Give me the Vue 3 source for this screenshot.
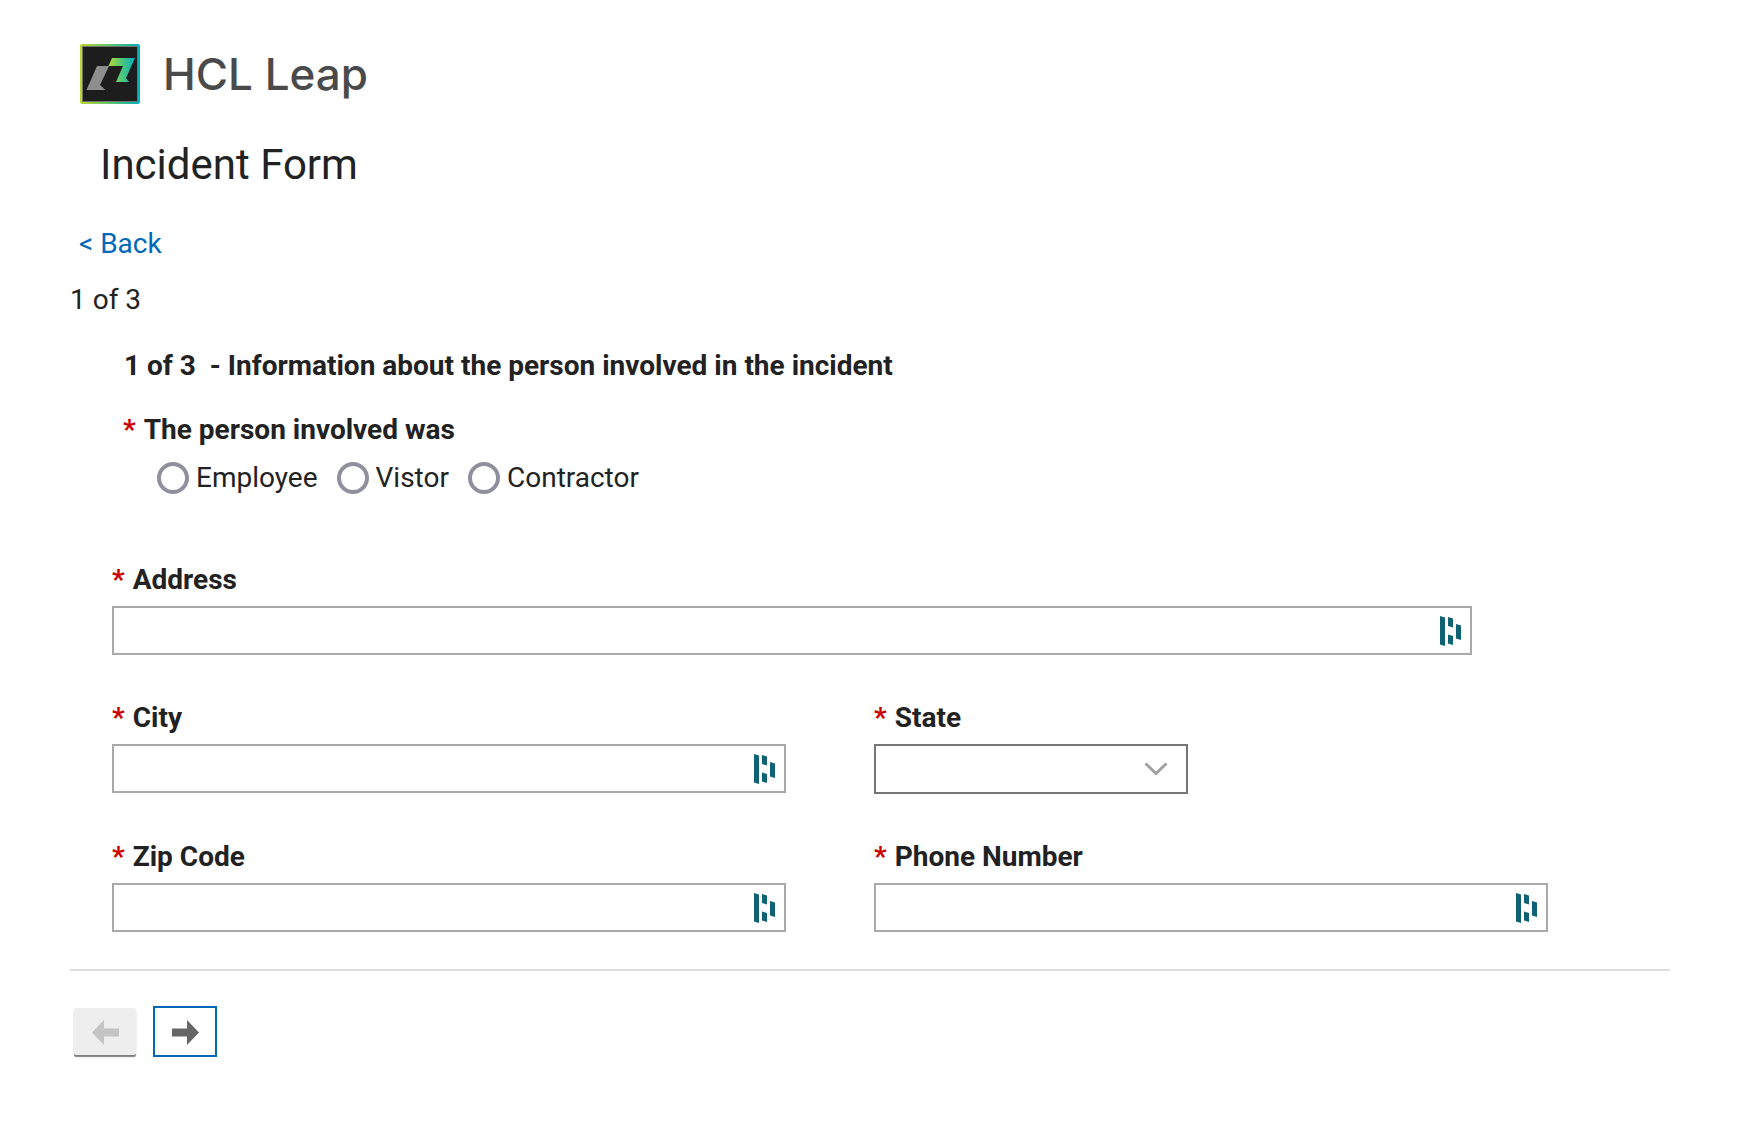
<script setup>
import { ref, reactive } from 'vue'

const personTypes = ['Employee', 'Vistor', 'Contractor']
const personType = ref('')

const fields = [
  { id: 'address', label: 'Address', type: 'text', wide: true },
  { id: 'city', label: 'City', type: 'text' },
  { id: 'state', label: 'State', type: 'select' },
  { id: 'zip', label: 'Zip Code', type: 'text' },
  { id: 'phone', label: 'Phone Number', type: 'tel' },
]

const form = reactive({ address: '', city: '', state: '', zip: '', phone: '' })
</script>

<template>
  <div class="page">
    <header class="brand">
      <svg class="brand-logo" viewBox="0 0 60 60" aria-hidden="true">
        <defs>
          <linearGradient id="frame" x1="0" y1="0" x2="1" y2="0">
            <stop offset="0" stop-color="#bfd730" />
            <stop offset="0.5" stop-color="#5cc46c" />
            <stop offset="1" stop-color="#00b0c0" />
          </linearGradient>
          <linearGradient id="mark" x1="0" y1="0" x2="1" y2="0">
            <stop offset="0" stop-color="#b4d832" />
            <stop offset="0.45" stop-color="#55c972" />
            <stop offset="1" stop-color="#08afc4" />
          </linearGradient>
        </defs>
        <rect width="60" height="60" rx="2" fill="url(#frame)" />
        <rect x="2.5" y="2.5" width="55" height="55" fill="#1d1d1d" stroke="#6f7668" stroke-width="1" />
        <path d="M17 22H29L20 41L25.500 46H6.500Z" fill="#8e8e8e" />
        <path d="M32 14H55L46 34L49 38H36L43 22H28.500Z" fill="url(#mark)" />
      </svg>
      <span class="brand-name">HCL Leap</span>
    </header>

    <h1 class="form-title">Incident Form</h1>
    <a class="back-link" href="#">&lt; Back</a>
    <p class="page-count">1 of 3</p>

    <form class="form" @submit.prevent>
      <h2 class="section-title">1 of 3 &nbsp;- Information about the person involved in the incident</h2>

      <fieldset class="person">
        <legend class="label"><span class="required">*</span>The person involved was</legend>
        <div class="radios">
          <label v-for="type in personTypes" :key="type" class="radio">
            <input v-model="personType" type="radio" name="person" :value="type" />
            {{ type }}
          </label>
        </div>
      </fieldset>

      <div class="fields">
        <div
          v-for="field in fields"
          :key="field.id"
          class="field"
          :class="{ wide: field.wide }"
        >
          <label class="label" :for="field.id"><span class="required">*</span>{{ field.label }}</label>
          <div v-if="field.type === 'select'" class="control select-control">
            <select :id="field.id" v-model="form[field.id]">
              <option value=""></option>
            </select>
            <svg class="chevron" viewBox="0 0 24 14" aria-hidden="true">
              <path d="M1.500 1.500L12 11.500L22.500 1.500" fill="none" stroke="#a0a0a0" stroke-width="3" />
            </svg>
          </div>
          <div v-else class="control">
            <input :id="field.id" v-model="form[field.id]" :type="field.type" />
            <svg class="autofill" viewBox="0 0 21 30" aria-hidden="true">
              <path
                d="M0 0L5 1.500V30L0 28.500ZM8 1L13 2.500V11.500L8 10ZM8 18.500L13 20V29L8 27.500ZM16 8L21 9.500V24L16 22.500Z"
                fill="#0e6274"
              />
            </svg>
          </div>
        </div>
      </div>
    </form>

    <footer class="pager">
      <button class="pager-btn prev" type="button" aria-label="Previous page" disabled>
        <svg viewBox="0 0 27 25" aria-hidden="true">
          <path d="M0 12.500L12 0V8.500H27V16.500H12V25Z" fill="#c4c4c4" />
        </svg>
      </button>
      <button class="pager-btn next" type="button" aria-label="Next page">
        <svg viewBox="0 0 27 25" aria-hidden="true">
          <path d="M27 12.500L15 0V8.500H0V16.500H15V25Z" fill="#666" />
        </svg>
      </button>
    </footer>
  </div>
</template>

<style>
body {
  margin: 0;
  background: #fff;
}
</style>

<style scoped>
.page {
  padding: 44px 74px 44px 70px;
  font-family: Roboto, 'Liberation Sans', sans-serif;
  font-size: 28px;
  line-height: 32px;
  color: #222;
}
.brand {
  display: flex;
  align-items: center;
  gap: 23px;
  padding-left: 10px;
}
.brand-logo {
  width: 60px;
  height: 60px;
}
.brand-name {
  font-family: Inter, sans-serif;
  font-size: 44px;
  line-height: 60px;
  font-weight: 500;
  color: #4a4a4a;
}
.form-title {
  margin: 37px 0 0 30px;
  font-size: 42px;
  line-height: 48px;
  font-weight: 400;
}
.back-link {
  display: block;
  width: fit-content;
  margin: 39px 0 0 9px;
  color: #0068b8;
  text-decoration: none;
}
.page-count { margin: 24px 0 0; }
.form { padding: 34px 34px 37px 42px; }
.section-title {
  margin: 0 0 32px 12px;
  font-size: 28px;
  line-height: 32px;
  font-weight: 700;
}
.person {
  margin: 0 0 70px 11px;
  padding: 0;
  border: none;
}
.label {
  display: block;
  padding: 0;
  font-weight: 700;
}
.required {
  margin-right: 8px;
  color: #c00;
}
.radios {
  display: flex;
  gap: 19px;
  margin-top: 16px;
  padding-left: 34px;
}
.radio {
  display: flex;
  align-items: center;
  gap: 7px;
}
.radio input {
  appearance: none;
  box-sizing: border-box;
  width: 32px;
  height: 32px;
  margin: 0;
  border: 4px solid #8f8f9d;
  border-radius: 50%;
  background: #fff;
}
.radio input:checked { background: radial-gradient(#0068b8 50%, #fff 55%); }
.fields {
  display: grid;
  grid-template-columns: 1fr 1fr;
  row-gap: 47px;
}
.field { padding-right: 88px; }
.field.wide {
  grid-column: 1 / -1;
  padding-right: 164px;
}
.control {
  display: flex;
  align-items: center;
  box-sizing: border-box;
  height: 49px;
  margin-top: 10px;
  padding-right: 9px;
  border: 2px solid #a9a9a9;
  background: #fff;
}
.control input {
  flex: 1;
  min-width: 0;
  height: 100%;
  box-sizing: border-box;
  padding: 0 12px;
  border: none;
  outline: none;
  background: transparent;
  font: inherit;
  color: inherit;
}
.autofill {
  width: 21px;
  height: 30px;
}
.select-control {
  position: relative;
  max-width: 314px;
  height: 50px;
  padding: 0;
  border-color: #767676;
}
.select-control select {
  appearance: none;
  width: 100%;
  height: 100%;
  padding: 0 50px 0 12px;
  border: none;
  background: transparent;
  font: inherit;
  color: inherit;
}
.chevron {
  position: absolute;
  right: 18px;
  width: 24px;
  height: 14px;
  pointer-events: none;
}
.pager {
  display: flex;
  align-items: center;
  gap: 17px;
  padding: 35px 0 0 4px;
  border-top: 2px solid #ddd;
}
.pager-btn {
  display: flex;
  align-items: center;
  justify-content: center;
  box-sizing: border-box;
  padding: 2px 0 0;
}
.pager-btn svg {
  width: 27px;
  height: 25px;
}
.prev {
  width: 62px;
  height: 47px;
  border: none;
  border-radius: 2px;
  background: #eee;
  box-shadow: 0 2px 1px rgba(0, 0, 0, 0.5);
}
.next {
  width: 64px;
  height: 51px;
  border: 2px solid #0068b8;
  background: #fff;
  cursor: pointer;
}
</style>
